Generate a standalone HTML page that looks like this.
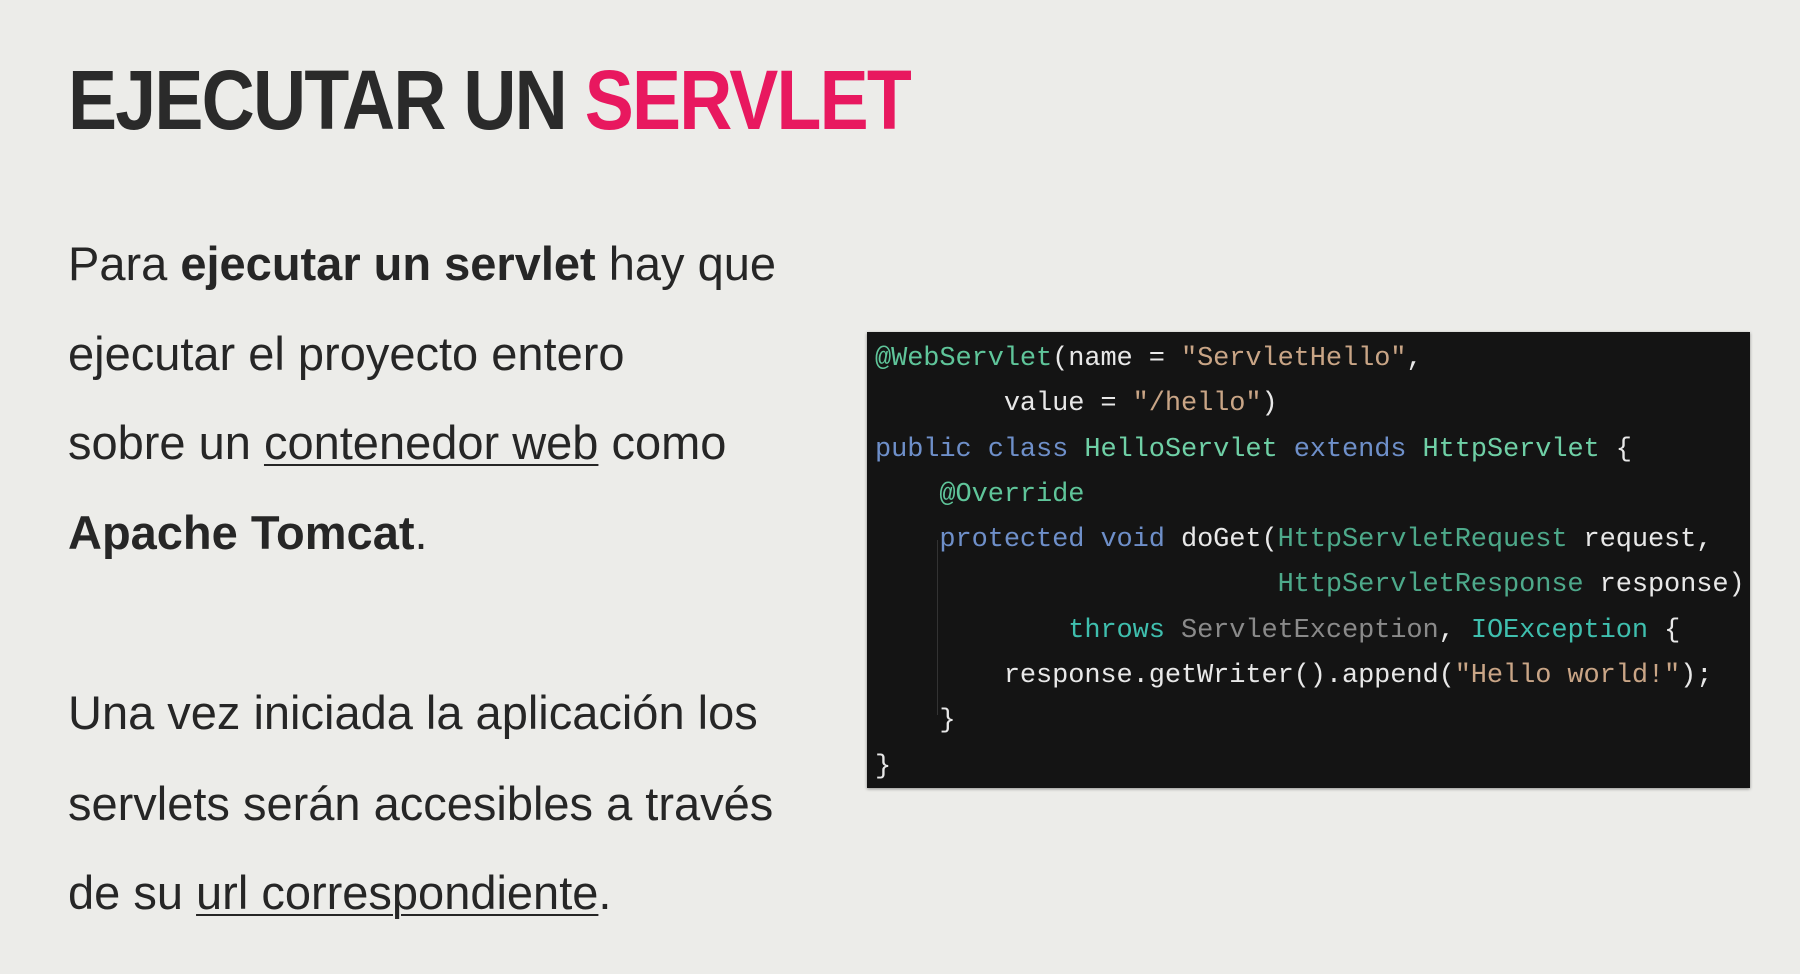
<!DOCTYPE html>
<html><head><meta charset="utf-8"><style>
html,body{margin:0;padding:0}
body{width:1800px;height:974px;background:#ecece9;position:relative;overflow:hidden;font-family:"Liberation Sans",sans-serif;color:#262626}
.t{position:absolute;left:68px;top:52px;font-size:84px;font-weight:bold;letter-spacing:-2px;white-space:nowrap;color:#2a2a2a;transform:scaleX(0.875);transform-origin:0 0}
.t span{color:#e8185f}
.l{position:absolute;left:68px;font-size:47px;white-space:nowrap;letter-spacing:0;line-height:1}
.l b{font-weight:bold}
.l u{text-decoration-thickness:2px;text-underline-offset:5px}
.code{position:absolute;left:867px;top:332px;width:883px;height:456px;background:#141414;box-shadow:0 1px 3px rgba(0,0,0,.4)}
.code pre{margin:0;position:absolute;left:8px;top:5px;font-family:"Liberation Mono",monospace;font-size:27px;line-height:45.3px;color:#e8e8e8;letter-spacing:-0.1px}
.a{color:#5fc59a}.s{color:#c9a586}.k{color:#6e8fc9}.c{color:#6fd0a6}.g{color:#4da98a}.x{color:#8a8a8a}.h{color:#3fbfae}
.bar{position:absolute;left:70px;top:208px;width:1px;height:175px;background:#333}
</style></head><body>
<div class="t">EJECUTAR UN <span>SERVLET</span></div>
<div class="l" style="top:240px">Para <b>ejecutar un servlet</b> hay que</div>
<div class="l" style="top:330px">ejecutar el proyecto entero</div>
<div class="l" style="top:419px">sobre un <u>contenedor web</u> como</div>
<div class="l" style="top:509px"><b>Apache Tomcat</b>.</div>
<div class="l" style="top:689px">Una vez iniciada la aplicación los</div>
<div class="l" style="top:780px">servlets serán accesibles a través</div>
<div class="l" style="top:869px">de su <u>url correspondiente</u>.</div>
<div class="code"><div class="bar"></div><pre><span class="a">@WebServlet</span>(name = <span class="s">"ServletHello"</span>,
        value = <span class="s">"/hello"</span>)
<span class="k">public class</span> <span class="c">HelloServlet</span> <span class="k">extends</span> <span class="c">HttpServlet</span> {
    <span class="a">@Override</span>
    <span class="k">protected void</span> doGet(<span class="g">HttpServletRequest</span> request,
                         <span class="g">HttpServletResponse</span> response)
            <span class="h">throws</span> <span class="x">ServletException</span>, <span class="h">IOException</span> {
        response.getWriter().append(<span class="s">"Hello world!"</span>);
    }
}</pre></div>
</body></html>
